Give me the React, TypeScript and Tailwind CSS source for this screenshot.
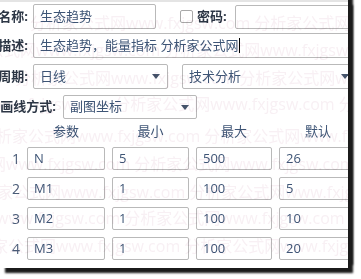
import { ReactNode } from "react"

const font = { fontFamily: '"Open Sans", "Noto Sans CJK SC", sans-serif' }

function Label({ children, w }: { children: ReactNode; w: string }) {
  return (
    <div className={`${w} shrink-0 flex justify-end whitespace-nowrap text-[13px] font-bold text-[#2c3645]`}>
      {children}
    </div>
  )
}

function Field({ value, className, cursor }: { value: string; className: string; cursor?: boolean }) {
  return (
    <div
      className={`shrink-0 flex items-center border border-[#b9b9b9] rounded-[2px] bg-white pl-[6px] text-[13px] text-[#3e5576] whitespace-nowrap overflow-hidden ${className}`}
    >
      {value}
      {cursor && <span className="ml-[1px] w-px h-[15px] bg-black" />}
    </div>
  )
}

function Select({ value, className }: { value: string; className: string }) {
  return (
    <div
      className={`shrink-0 flex items-center justify-between border border-[#b9b9b9] rounded-[2px] bg-white pl-[6px] pr-[7px] text-[13px] text-[#3e5576] whitespace-nowrap ${className}`}
    >
      <span>{value}</span>
      <svg width="8" height="5" viewBox="0 0 8 5">
        <path d="M0 0h8L4 5z" fill="#45546b" />
      </svg>
    </div>
  )
}

const params = [
  ["N", "5", "500", "26"],
  ["M1", "1", "100", "5"],
  ["M2", "1", "100", "10"],
  ["M3", "1", "100", "20"],
]

const watermarkRows = [
  { top: 9, left: 30 },
  { top: 36, left: -60 },
  { top: 64, left: 15 },
  { top: 90, left: -110 },
  { top: 122, left: -20 },
  { top: 150, left: -90 },
  { top: 178, left: -35 },
  { top: 204, left: -100 },
  { top: 232, left: -40 },
]

export default function App() {
  return (
    <div className="w-[361px] h-[279px] bg-white overflow-hidden" style={font}>
      <div className="relative w-[348px] h-[268px] bg-white border-t-2 border-[#e4e4e4] overflow-hidden shadow-[5px_5px_2px_#1b1b1b,5px_-3px_2px_#1b1b1b]">
        <div className="flex flex-col pt-[2px]">
          {/* name / password */}
          <div className="flex items-center h-[25px]">
            <Label w="w-[28px]">名称:</Label>
            <Field value="生态趋势" className="ml-[5px] w-[123px] h-[25px]" />
            <div className="shrink-0 ml-[24px] w-[13px] h-[13px] border border-[#a9a9a9] rounded-[2px] bg-white" />
            <div className="shrink-0 ml-[4px] text-[13px] font-bold text-[#2c3645] whitespace-nowrap">密码:</div>
            <Field value="" className="ml-[8px] w-[130px] h-[24px]" />
          </div>

          {/* description */}
          <div className="flex items-center h-[25px] mt-[4px]">
            <Label w="w-[28px]">描述:</Label>
            <Field value="生态趋势，能量指标 分析家公式网" cursor className="ml-[5px] w-[330px] h-[25px]" />
          </div>

          {/* period */}
          <div className="flex items-center h-[25px] mt-[6px]">
            <Label w="w-[28px]">周期:</Label>
            <Select value="日线" className="ml-[5px] w-[135px] h-[25px]" />
            <Select value="技术分析" className="ml-[14px] w-[175px] h-[25px]" />
          </div>

          {/* draw mode */}
          <div className="flex items-center h-[24px] mt-[6px]">
            <Label w="w-[56px]">画线方式:</Label>
            <Select value="副图坐标" className="ml-[7px] w-[134px] h-[24px]" />
          </div>

          {/* params table */}
          <div className="grid grid-cols-[20px_78px_77px_76px_78px] gap-x-[7px] gap-y-[7px] mt-[5px] text-[13px] text-[#3e5576]">
            <div />
            <div className="h-[16px] flex items-center justify-center">参数</div>
            <div className="h-[16px] flex items-center justify-center">最小</div>
            <div className="h-[16px] flex items-center justify-center">最大</div>
            <div className="h-[16px] flex items-center justify-center">默认</div>
            {params.map((row, i) => (
              <div key={i} className="contents">
                <div className="h-[23px] flex items-center justify-end text-[14px] text-[#4a5c78]">{i + 1}</div>
                {row.map((v, j) => (
                  <Field key={j} value={v} className="w-full h-[23px]" />
                ))}
              </div>
            ))}
          </div>
        </div>

        {/* watermark */}
        <div className="pointer-events-none absolute inset-0 mix-blend-multiply">
          {watermarkRows.map((r, i) => (
            <div
              key={i}
              className="absolute whitespace-nowrap text-[16px] text-[#f8f0f4]"
              style={{ top: r.top, left: r.left }}
            >
              分析家公式网www.fxjgsw.com 分析家公式网www.fxjgsw.com 分析家公式网www.fxjgsw.com
            </div>
          ))}
        </div>
      </div>
    </div>
  )
}
